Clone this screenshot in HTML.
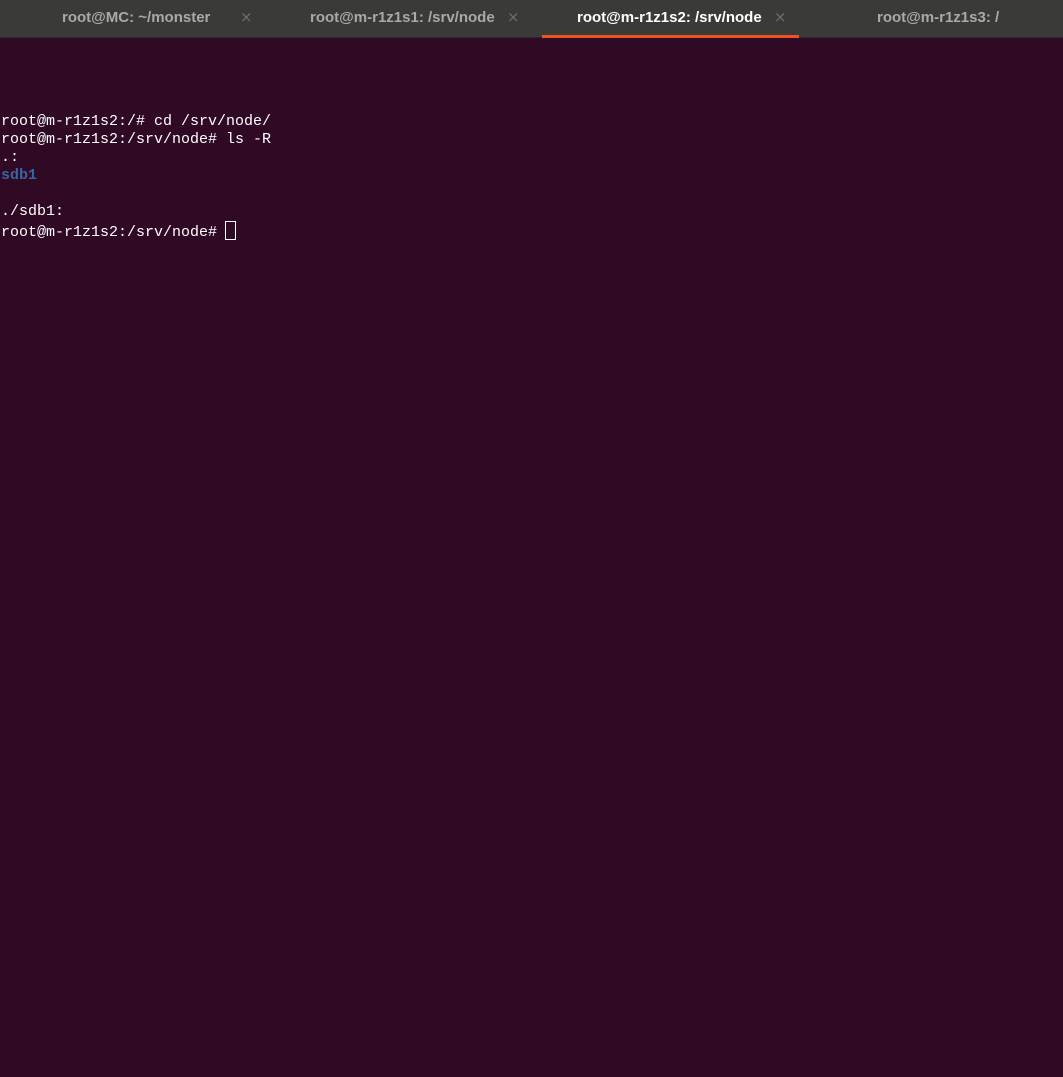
<!DOCTYPE html>
<html><head><style>
body{margin:0;width:1063px;height:1077px;background:#300a24;overflow:hidden;position:relative}
.bar{position:absolute;left:0;top:0;width:1063px;height:37px;background:#3a3a38;border-bottom:1px solid #2a2a28}
.t{position:absolute;top:9px;font:bold 15px "Liberation Sans",sans-serif;color:#a9a9a5}
.x{position:absolute;top:8px;font:15px "DejaVu Sans",sans-serif;color:#6f6f6c}
.ul{position:absolute;left:542px;top:35px;width:257px;height:3px;background:#e95420}
pre{position:absolute;left:1px;top:113px;margin:0;font:15px/18px "Liberation Mono",monospace;color:#ffffff}
.b{color:#3465a4;font-weight:bold}
.cur{display:inline-block;vertical-align:-4px;box-sizing:border-box;width:11px;height:19px;border:1px solid #fff;margin-left:-1px}
</style></head><body>
<div class="bar">
<span class="t" style="left:62px">root@MC: ~/monster</span><span class="x" style="left:240px">×</span>
<span class="t" style="left:310px">root@m-r1z1s1: /srv/node</span><span class="x" style="left:507px">×</span>
<span class="t" style="left:577px;color:#fff">root@m-r1z1s2: /srv/node</span><span class="x" style="left:774px">×</span>
<span class="t" style="left:877px">root@m-r1z1s3: /</span>
<div class="ul"></div>
</div>
<pre>root@m-r1z1s2:/# cd /srv/node/
root@m-r1z1s2:/srv/node# ls -R
.:
<span class="b">sdb1</span>

./sdb1:
root@m-r1z1s2:/srv/node# <span class="cur"></span></pre>
</body></html>
